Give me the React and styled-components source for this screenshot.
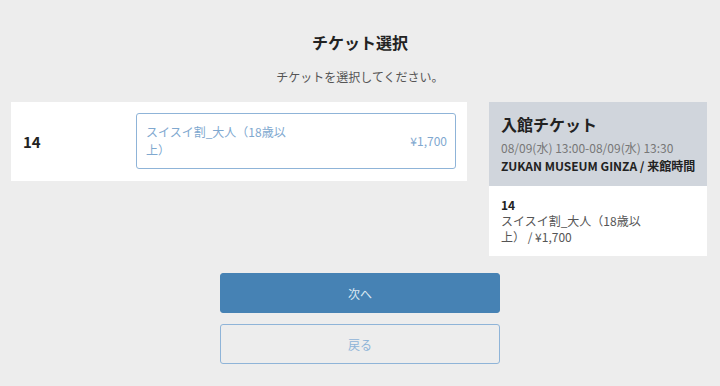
import React from 'react';
import styled, { createGlobalStyle } from "styled-components";

const Global = createGlobalStyle`
    body {
        margin: 0;
        background: #ededed;
        font-family: "Noto Sans CJK JP", "Noto Sans", sans-serif;
        color: #333;
    }
`;

const Page = styled("div")`
    padding-top: 32px;
    padding-bottom: 22px;
`;

const Title = styled("h1")`
    margin: 0;
    text-align: center;
    font-size: 16px;
    line-height: 20px;
    font-weight: 700;
    color: #222;
`;

const Lead = styled("p")`
    margin: 16px 0 16px;
    text-align: center;
    font-size: 12px;
    line-height: 18px;
    color: #555;
`;

const Columns = styled("div")`
    display: flex;
    align-items: flex-start;
    gap: 22px;
    padding: 0 13px 0 11px;
`;

const TicketPanel = styled("div")`
    flex: 1;
    display: flex;
    align-items: center;
    background: #fff;
    padding: 11px 11px 12px 12px;
`;

const Count = styled("div")`
    width: 113px;
    font-size: 15px;
    font-weight: 700;
    color: #222;
`;

const Option = styled("div")`
    flex: 1;
    display: flex;
    align-items: center;
    justify-content: space-between;
    border: 1px solid #8fb4d8;
    border-radius: 3px;
    padding: 9px 8px 9px 9px;
    color: #80a8cf;
    font-size: 12px;
    line-height: 18px;
`;

const Label = styled("div")`
    max-width: 145px;
`;

const Summary = styled("div")`
    width: 218px;
    flex-shrink: 0;
    background: #fff;
`;

const SummaryHead = styled("div")`
    background: #d0d5dc;
    padding: 11px 12px 11px;
`;

const SummaryTitle = styled("div")`
    font-size: 16px;
    line-height: 23px;
    font-weight: 700;
    color: #222;
    margin-bottom: 3px;
`;

const Line = styled("div")`
    font-size: 12px;
    line-height: 18px;
    white-space: nowrap;
    color: ${p => p.$strong ? "#222" : "#777"};
    font-weight: ${p => p.$strong ? 700 : 400};
`;

const SummaryBody = styled("div")`
    padding: 11px 12px;
    font-size: 12px;
    line-height: 16px;
    color: #555;
`;

const Qty = styled("div")`
    font-weight: 700;
    color: #222;
`;

const Desc = styled("div")`
    max-width: 145px;
`;

const Actions = styled("div")`
    width: 280px;
    margin: 17px auto 0;
    display: flex;
    flex-direction: column;
    gap: 11px;
`;

const Button = styled("button")`
    height: 40px;
    border-radius: 3px;
    font-family: inherit;
    font-size: 12px;
    border: 1px solid ${p => p.$primary ? "#4682b4" : "#8fb4d8"};
    background: ${p => p.$primary ? "#4682b4" : "transparent"};
    color: ${p => p.$primary ? "#dbe7f2" : "#8fb4d8"};
`;

export default () => (
  <Page>
    <Global />
    <Title>チケット選択</Title>
    <Lead>チケットを選択してください。</Lead>
    <Columns>
        <TicketPanel>
            <Count>14</Count>
            <Option>
                <Label>スイスイ割_大人（18歳以上）</Label>
                <span>¥1,700</span>
            </Option>
        </TicketPanel>
        <Summary>
            <SummaryHead>
                <SummaryTitle>入館チケット</SummaryTitle>
                <Line>08/09(水) 13:00-08/09(水) 13:30</Line>
                <Line $strong>ZUKAN MUSEUM GINZA / 来館時間</Line>
            </SummaryHead>
            <SummaryBody>
                <Qty>14</Qty>
                <Desc>スイスイ割_大人（18歳以上） / ¥1,700</Desc>
            </SummaryBody>
        </Summary>
    </Columns>
    <Actions>
        <Button $primary>次へ</Button>
        <Button>戻る</Button>
    </Actions>
  </Page>
)
